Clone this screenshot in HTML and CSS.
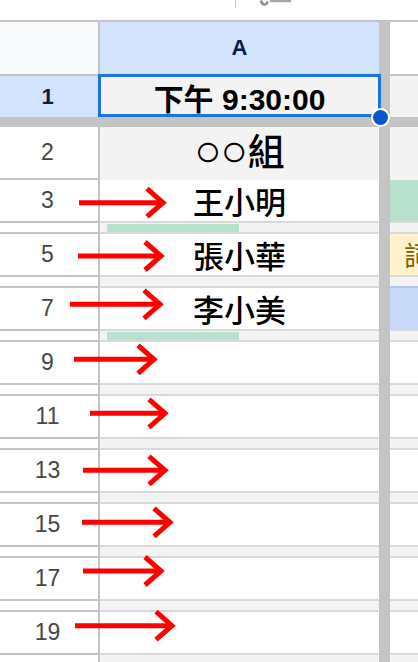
FILE: index.html
```html
<!DOCTYPE html>
<html lang="zh-Hant">
<head>
<meta charset="utf-8">
<title>Sheet</title>
<link rel="stylesheet" href="styles.css">
</head>
<body>
<div class="sheet">
  <div class="topbar">
    <span class="tb-divider"></span>
    <svg class="tb-icon" width="34" height="6" viewBox="0 0 34 6">
      <path d="M2 0.5 Q2.5 4.5 5.5 4.5 Q8 4.5 8.5 1.5" fill="none" stroke="#8e9296" stroke-width="2.6"/>
      <rect x="11" y="0" width="21" height="2.2" fill="#a3a6a9"/>
    </svg>
  </div>

  <div class="row hdr">
    <div class="rh corner"></div>
    <div class="ca colhead">A</div>
    <div class="sep"></div>
    <div class="cb"></div>
  </div>

  <div class="row r1">
    <div class="rh sel">1</div>
    <div class="ca a1">下午 9:30:00<span class="handle"></span></div>
    <div class="sep"></div>
    <div class="cb grey"></div>
  </div>

  <div class="frozen-h"></div>

  <div class="row r2">
    <div class="rh">2</div>
    <div class="ca title"><span class="circ">○○</span>組</div>
    <div class="sep"></div>
    <div class="cb grey"></div>
  </div>

  <div class="row tall"><div class="rh">3</div><div class="ca name">王小明</div><div class="sep"></div><div class="cb green"></div></div>
  <div class="row short"><div class="rh"></div><div class="ca"><span class="bar"></span></div><div class="sep"></div><div class="cb"></div></div>
  <div class="row tall"><div class="rh">5</div><div class="ca name">張小華</div><div class="sep"></div><div class="cb yellow"><span class="chip">詞</span></div></div>
  <div class="row short"><div class="rh"></div><div class="ca"></div><div class="sep"></div><div class="cb blue-top"></div></div>
  <div class="row tall"><div class="rh">7</div><div class="ca name">李小美</div><div class="sep"></div><div class="cb blue"></div></div>
  <div class="row short"><div class="rh"></div><div class="ca"><span class="bar"></span></div><div class="sep"></div><div class="cb"></div></div>
  <div class="row tall"><div class="rh">9</div><div class="ca"></div><div class="sep"></div><div class="cb"></div></div>
  <div class="row short"><div class="rh"></div><div class="ca"></div><div class="sep"></div><div class="cb"></div></div>
  <div class="row tall"><div class="rh">11</div><div class="ca"></div><div class="sep"></div><div class="cb"></div></div>
  <div class="row short"><div class="rh"></div><div class="ca"></div><div class="sep"></div><div class="cb"></div></div>
  <div class="row tall"><div class="rh">13</div><div class="ca"></div><div class="sep"></div><div class="cb"></div></div>
  <div class="row short"><div class="rh"></div><div class="ca"></div><div class="sep"></div><div class="cb"></div></div>
  <div class="row tall"><div class="rh">15</div><div class="ca"></div><div class="sep"></div><div class="cb"></div></div>
  <div class="row short"><div class="rh"></div><div class="ca"></div><div class="sep"></div><div class="cb"></div></div>
  <div class="row tall"><div class="rh">17</div><div class="ca"></div><div class="sep"></div><div class="cb"></div></div>
  <div class="row short"><div class="rh"></div><div class="ca"></div><div class="sep"></div><div class="cb"></div></div>
  <div class="row tall"><div class="rh">19</div><div class="ca"></div><div class="sep"></div><div class="cb"></div></div>
  <div class="row short"><div class="rh"></div><div class="ca"></div><div class="sep"></div><div class="cb"></div></div>
</div>

<svg class="arrows" width="418" height="662" viewBox="0 0 418 662">
  <g fill="none" stroke="#ff0000" stroke-width="5" stroke-linejoin="miter">
    <path d="M79 202.7 H161"/><path d="M147 188.7 L163 202.7 L147 216.7"/>
    <path d="M78 256 H159"/><path d="M145 242 L161 256 L145 270"/>
    <path d="M70 304.3 H158"/><path d="M144 290.3 L160 304.3 L144 318.3"/>
    <path d="M74 359.3 H152"/><path d="M138 345.3 L154 359.3 L138 373.3"/>
    <path d="M90 413.3 H163"/><path d="M149 399.3 L165 413.3 L149 427.3"/>
    <path d="M83 470.3 H163"/><path d="M149 456.3 L165 470.3 L149 484.3"/>
    <path d="M82 522.3 H168"/><path d="M154 508.3 L170 522.3 L154 536.3"/>
    <path d="M83 571 H159"/><path d="M145 557 L161 571 L145 585"/>
    <path d="M75 625.7 H170"/><path d="M156 611.7 L172 625.7 L156 639.7"/>
  </g>
</svg>
</body>
</html>
```

FILE: styles.css
```css
html, body {
  margin: 0;
  padding: 0;
  background: #ffffff;
}
body {
  width: 418px;
  height: 662px;
  overflow: hidden;
  position: relative;
  font-family: "Liberation Sans", Arial, "Noto Sans CJK TC", sans-serif;
}
.sheet {
  display: flex;
  flex-direction: column;
}
.topbar {
  height: 20px;
  border-bottom: 2px solid #c4c4c4;
  display: flex;
  align-items: flex-start;
  flex-shrink: 0;
}
.tb-divider {
  width: 1.5px;
  height: 8px;
  background: #c4c7c5;
  margin-left: 234.5px;
}
.tb-icon {
  display: block;
  margin-left: 23px;
}
.row {
  display: flex;
  flex-shrink: 0;
}
.rh {
  width: 95px;
  padding-right: 3px;
  border-right: 2px solid #c4c4c4;
  border-bottom: 2px solid #c4c4c4;
  background: #ffffff;
  display: flex;
  align-items: center;
  justify-content: center;
  font-size: 23px;
  color: #444746;
}
.ca {
  width: 279px;
  border-bottom: 2px solid #d9d9d9;
  background: #ffffff;
  display: flex;
  align-items: center;
  justify-content: center;
  position: relative;
}
.sep {
  width: 11px;
  background: #c4c4c4;
}
.cb {
  flex: 1;
  border-bottom: 2px solid #d9d9d9;
  background: #ffffff;
  overflow: hidden;
  display: flex;
  align-items: center;
}

/* header row */
.hdr { height: 54px; }
.hdr .rh, .hdr .ca, .hdr .cb { border-bottom-color: #c4c4c4; }
.corner { background: #f8f9fa; }
.ca.colhead {
  background: #d3e3fd;
  font: bold 22px "Liberation Sans", Arial, sans-serif;
  color: #041e49;
}

/* row 1 */
.r1 { height: 41px; }
.r1 .rh, .r1 .ca, .r1 .cb { border-bottom: 0; }
.rh.sel {
  background: #d3e3fd;
  font: bold 22px "Liberation Sans", Arial, sans-serif;
  color: #041e49;
}
.a1 {
  background: #f3f3f3;
  font-weight: bold;
  font-size: 30px;
  color: #000000;
}
.a1::after {
  content: "";
  position: absolute;
  top: -2px;
  left: -2px;
  right: -2px;
  bottom: 0;
  border: 3px solid #1a73e8;
  pointer-events: none;
}
.handle {
  position: absolute;
  right: -11px;
  bottom: -10px;
  width: 15px;
  height: 15px;
  border: 2px solid #ffffff;
  border-radius: 50%;
  background: #0b57d0;
  z-index: 2;
}
.grey { background: #f3f3f3; }

.frozen-h {
  height: 10px;
  background: #c4c4c4;
  flex-shrink: 0;
}

/* row 2 */
.r2 { height: 53px; }
.r2 .ca {
  background: #f3f3f3;
  border-bottom-color: #f3f3f3;
}
.r2 .cb { border-bottom-color: #f3f3f3; }
.ca.title {
  display: block;
  text-align: center;
  height: 51px;
  line-height: 46px;
  font-size: 37px;
  color: #000000;
  font-family: "Noto Sans CJK TC", sans-serif;
  font-weight: 500;
}
.circ {
  font-family: "Liberation Sans", Arial, sans-serif;
  font-size: 45px;
  line-height: 0;
  font-weight: normal;
  letter-spacing: -1px;
  margin-right: 1px;
}

/* body rows */
.tall { height: 43px; }
.short { height: 11px; }
.short .ca, .short .cb { background: #f3f3f3; }
.short .ca {
  justify-content: flex-start;
  padding-left: 7px;
  width: 272px;
}
.bar {
  width: 132px;
  height: 8px;
  background: #b7e1cd;
}
.name {
  font-size: 31px;
  color: #000000;
  font-family: "Noto Sans CJK TC", sans-serif;
  font-weight: 500;
}
.green { background: #b7e1cd; }
.yellow { background: #fff2cc; }
.blue { background: #c9daf8; }
.blue-top { border-bottom-color: #b4c6e8; }
.chip {
  margin-left: 14px;
  font-size: 27px;
  color: #7f6000;
  font-family: "Noto Sans CJK TC", sans-serif;
  white-space: nowrap;
}

.arrows {
  position: absolute;
  left: 0;
  top: 0;
  pointer-events: none;
}
```
